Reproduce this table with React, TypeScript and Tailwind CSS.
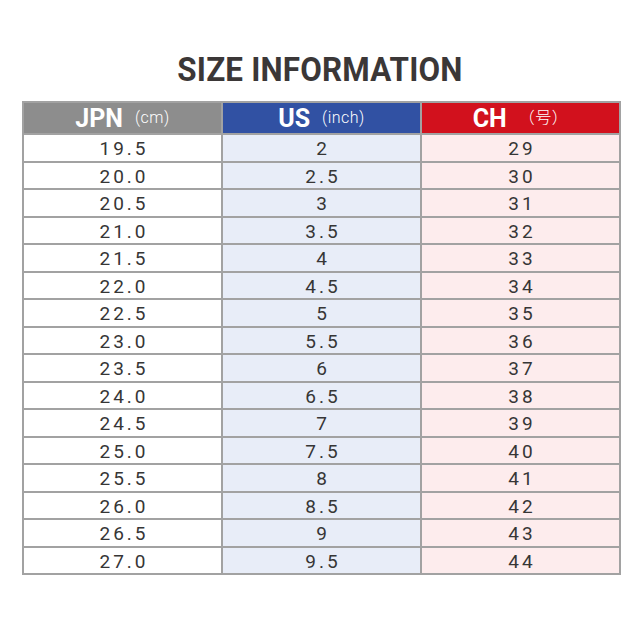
const rows: [string, string, string][] = [
  ["19.5", "2", "29"],
  ["20.0", "2.5", "30"],
  ["20.5", "3", "31"],
  ["21.0", "3.5", "32"],
  ["21.5", "4", "33"],
  ["22.0", "4.5", "34"],
  ["22.5", "5", "35"],
  ["23.0", "5.5", "36"],
  ["23.5", "6", "37"],
  ["24.0", "6.5", "38"],
  ["24.5", "7", "39"],
  ["25.0", "7.5", "40"],
  ["25.5", "8", "41"],
  ["26.0", "8.5", "42"],
  ["26.5", "9", "43"],
  ["27.0", "9.5", "44"],
];

const headers = [
  { main: "JPN", unit: "(cm)", bg: "bg-[#8d8d8d]" },
  { main: "US", unit: "(inch)", bg: "bg-[#3151a3]" },
  { main: "CH", unit: "（号）", bg: "bg-[#d2111d]" },
];

const cellBg = ["bg-white", "bg-[#e8edf8]", "bg-[#fdeced]"];

export default function App() {
  return (
    <div className="w-[640px] h-[623px] bg-white font-['Roboto','Noto_Sans_CJK_JP',sans-serif]">
      <div className="pt-[52px] h-[101px]">
        <h1 className="text-center text-[33px] leading-[36px] font-bold text-[#3b3737] tracking-[0.2px] scale-x-[0.95]">
          SIZE INFORMATION
        </h1>
      </div>
      <div className="ml-[22px] w-[599px] grid grid-cols-3 gap-[2px] p-[2px] bg-[#a2a2a2]">
        {headers.map((h) => (
          <div
            key={h.main}
            className={`${h.bg} h-[30px] flex items-center justify-center gap-[12px] text-white`}
          >
            <span className="text-[25px] font-bold leading-none">{h.main}</span>
            <span className="text-[16px] font-light leading-none tracking-[0.5px]">{h.unit}</span>
          </div>
        ))}
        {rows.map((r) =>
          r.map((v, i) => (
            <div
              key={r[0] + i}
              className={`${cellBg[i]} h-[25.5px] flex items-center justify-center pt-[2px] text-[19px] leading-none text-[#363636] tracking-[3px] pl-[3px]`}
            >
              {v}
            </div>
          ))
        )}
      </div>
    </div>
  );
}
